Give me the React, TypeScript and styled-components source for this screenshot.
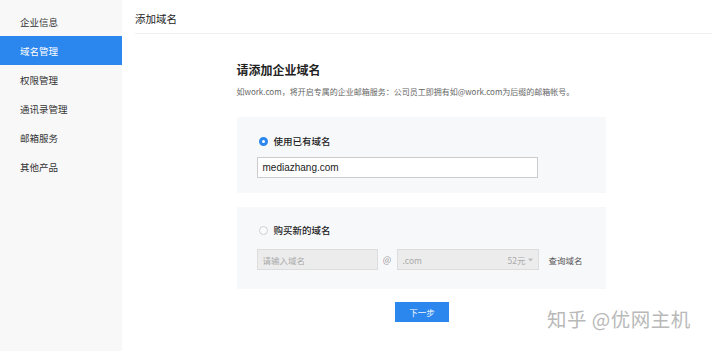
import React from 'react';
import styled, { createGlobalStyle } from 'styled-components';

const GlobalStyle = createGlobalStyle`
  html, body {
    margin: 0;
    padding: 0;
    background: #ffffff;
    font-family: "Noto Sans CJK SC", "Noto Sans", "Liberation Sans", sans-serif;
    color: #333;
  }
`;

const Page = styled.div`
  display: flex;
  width: 720px;
  height: 351px;
  position: relative;
  overflow: hidden;
`;

const Sidebar = styled.nav`
  width: 122px;
  flex-shrink: 0;
  background: #f8f8f9;
  padding-top: 7px;
  box-sizing: border-box;
`;

const NavItem = styled.div<{ active?: boolean }>`
  height: 29px;
  display: flex;
  align-items: center;
  padding-left: 20px;
  font-size: 9.5px;
  color: ${({ active }) => (active ? '#ffffff' : '#333')};
  background: ${({ active }) => (active ? '#2b86ee' : 'transparent')};
`;

const Main = styled.main`
  flex: 1;
  display: flex;
  flex-direction: column;
  padding: 0 8px 0 13px;
`;

const Header = styled.div`
  height: 34px;
  display: flex;
  align-items: center;
  padding-top: 4px;
  box-sizing: border-box;
  font-size: 10.5px;
  color: #222;
  border-bottom: 1px solid #f0f0f0;
`;

const Content = styled.div`
  width: 369px;
  align-self: center;
  margin-left: -5px;
  display: flex;
  flex-direction: column;
`;

const Title = styled.h2`
  margin: 28px 0 0;
  font-size: 12px;
  line-height: 16px;
  font-weight: 700;
  color: #222;
`;

const Desc = styled.p`
  margin: 8px 0 0;
  font-size: 8px;
  line-height: 12px;
  color: #666;
  white-space: nowrap;
`;

const Card = styled.div<{ top: number; pt: number; pb: number; gap: number }>`
  margin-top: ${({ top }) => top}px;
  background: #f7f8fa;
  padding: ${({ pt }) => pt}px 20px ${({ pb }) => pb}px 20px;
  display: flex;
  flex-direction: column;
  gap: ${({ gap }) => gap}px;
`;

const RadioRow = styled.label`
  display: flex;
  align-items: center;
  gap: 6px;
  height: 12px;
  font-size: 9.5px;
  font-weight: 500;
  color: #222;
  padding-left: 2px;
`;

const RadioDot = styled.span<{ checked?: boolean }>`
  width: 9px;
  height: 9px;
  border-radius: 50%;
  box-sizing: border-box;
  background: ${({ checked }) => (checked ? '#ffffff' : '#fbfbfb')};
  border: ${({ checked }) => (checked ? '3px solid #2b86ee' : '1px solid #cfcfcf')};
`;

const TextInput = styled.div<{ w: number; disabled?: boolean }>`
  width: ${({ w }) => w}px;
  height: 21px;
  box-sizing: border-box;
  border: 1px solid ${({ disabled }) => (disabled ? '#dddddd' : '#cccccc')};
  background: ${({ disabled }) => (disabled ? '#ececec' : '#ffffff')};
  display: flex;
  align-items: center;
  justify-content: space-between;
  padding: 0 5px;
  font-size: ${({ disabled }) => (disabled ? '8.5px' : '10px')};
  color: ${({ disabled }) => (disabled ? '#aaa' : '#222')};
  font-family: ${({ disabled }) => (disabled ? 'inherit' : '"Liberation Sans", sans-serif')};
`;

const BuyRow = styled.div`
  display: flex;
  align-items: center;
  height: 21px;
`;

const At = styled.span`
  width: 19px;
  text-align: center;
  font-size: 9px;
  color: #999;
`;

const Price = styled.span`
  display: flex;
  align-items: center;
  gap: 2px;
  color: #aaa;
`;

const Query = styled.span`
  margin-left: 10px;
  font-size: 8.5px;
  color: #555;
`;

const Footer = styled.div`
  display: flex;
  justify-content: center;
  margin-top: 13px;
`;

const NextButton = styled.button`
  width: 54px;
  height: 20px;
  border: none;
  background: #2b86ee;
  color: #fff;
  font-size: 8.5px;
  font-family: inherit;
  padding: 0;
  margin-left: 2px;
`;

const Watermark = styled.div`
  position: absolute;
  left: 547px;
  top: 304px;
  font-size: 19.5px;
  color: #b9b9b9;
  letter-spacing: 0.5px;
  text-shadow: 0 0 2px #fff;
  white-space: nowrap;
`;

const navItems = ['企业信息', '域名管理', '权限管理', '通讯录管理', '邮箱服务', '其他产品'];

export default function App() {
  return (
    <>
      <GlobalStyle />
      <Page>
        <Sidebar>
          {navItems.map((t) => (
            <NavItem key={t} active={t === '域名管理'}>
              {t}
            </NavItem>
          ))}
        </Sidebar>
        <Main>
          <Header>添加域名</Header>
          <Content>
            <Title>请添加企业域名</Title>
            <Desc>如work.com，将开启专属的企业邮箱服务：公司员工即拥有如@work.com为后缀的邮箱帐号。</Desc>
            <Card top={19} pt={18} pb={15} gap={10}>
              <RadioRow>
                <RadioDot checked />
                使用已有域名
              </RadioRow>
              <TextInput w={281}>mediazhang.com</TextInput>
            </Card>
            <Card top={14} pt={17} pb={19} gap={13}>
              <RadioRow>
                <RadioDot />
                购买新的域名
              </RadioRow>
              <BuyRow>
                <TextInput w={121} disabled>
                  请输入域名
                </TextInput>
                <At>@</At>
                <TextInput w={142} disabled>
                  <span>.com</span>
                  <Price>
                    52元
                    <svg width="5" height="4" viewBox="0 0 5 4">
                      <path d="M0 0.5 L5 0.5 L2.5 3.5 Z" fill="#bbb" />
                    </svg>
                  </Price>
                </TextInput>
                <Query>查询域名</Query>
              </BuyRow>
            </Card>
            <Footer>
              <NextButton>下一步</NextButton>
            </Footer>
          </Content>
        </Main>
        <Watermark>知乎 @优网主机</Watermark>
      </Page>
    </>
  );
}
